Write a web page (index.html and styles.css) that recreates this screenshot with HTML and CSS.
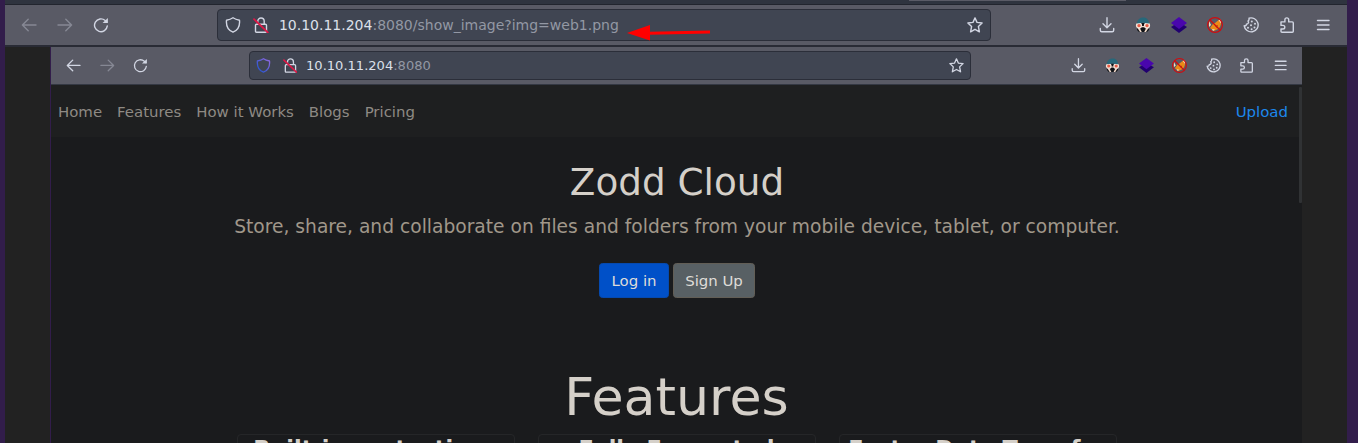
FILE: index.html
```html
<!DOCTYPE html>
<html lang="en">
<head>
<meta charset="utf-8">
<title>Zodd Cloud</title>
<link rel="stylesheet" href="styles.css">
</head>
<body>
<svg class="defs" width="0" height="0">
  <defs>
    <linearGradient id="shieldTint" x1="0" y1="1" x2="1" y2="0"><stop offset="0.2" stop-color="#3157d2"/><stop offset="1" stop-color="#9569df"/></linearGradient>
    <symbol id="back" viewBox="0 0 16 16"><path d="M15 8H1.600M7.200 2.300L1.400 8l5.800 5.700"/></symbol>
    <symbol id="forward" viewBox="0 0 16 16"><path d="M1 8h13.400M8.800 2.300L14.600 8l-5.800 5.700"/></symbol>
    <symbol id="reload" viewBox="0 0 16 16"><path d="M14.300 8.900a6.400 6.400 0 1 1-2.100-5.400l1.400 1.300"/><path class="solid" d="M14.900 1v5H9.600z"/></symbol>
    <symbol id="shield" viewBox="0 0 16 16"><path d="M8 .8c2 1.400 4 2 6.500 2.400.5 5.300-1.100 10-6.500 12C2.600 13.200 1 8.500 1.500 3.200 4 2.800 6 2.200 8 .8z"/></symbol>
    <symbol id="lock" viewBox="0 0 16 16"><path d="M4.800 7V4.200a3.200 3.200 0 0 1 6.400 0V7M3.500 7.200h9q1 0 1 1v6q0 1-1 1h-9q-1 0-1-1v-6q0-1 1-1z"/><path class="strike" d="M1 2.200L14.800 15.400"/></symbol>
    <symbol id="star" viewBox="0 0 16 16"><path d="M8 .9l2 4.500 5.100.6-3.700 3.500 1 5.300L8 12.300l-4.400 2.500 1-5.300L.9 6 6 5.400z"/></symbol>
    <symbol id="download" viewBox="0 0 16 16"><path d="M8 .7v9.800M4 6.700l4 4 4-4M1.300 11.500v1.700q0 1.500 1.500 1.500h10.400q1.500 0 1.500-1.500v-1.700"/></symbol>
    <symbol id="mask" viewBox="0 0 16 16">
      <path fill="#111418" stroke="none" d="M2 6h12v7l-2 2H4l-2-2z"/>
      <path fill="#f0d8ca" stroke="none" d="M6.500 9h3l.5 1.300H6zM2.500 11l2.500 4h1.800L4.800 11zM13.500 11L11 15H9.200l2-4z"/>
      <circle cx="4" cy="8.600" r="2.400" fill="#e65b45" stroke="#f2e4da"/><circle cx="12" cy="8.600" r="2.400" fill="#e65b45" stroke="#f2e4da"/>
      <path fill="#27687a" stroke="none" d="M1.800 6.600C2.500 2.500 5 .6 8.500.6S13.700 3 14 6.600L8 5.800z"/>
    </symbol>
    <symbol id="layers" viewBox="0 0 16 16"><path fill="#21006f" stroke="none" d="M0 10l8-5 8 5-8 6z"/><path fill="#4906ad" stroke="none" d="M0 6l8-6 8 6-8 6z"/></symbol>
    <symbol id="nofox" viewBox="0 0 16 16">
      <path fill="#eb8a18" stroke="none" d="M3 11l3-4 2-1 5-4 1 5-1 3-2 2-4 2z"/><path fill="#f3dfc4" stroke="none" d="M11.500 3l2.500-.5v4zM2 4l2 4-2 2zM5 12l3 .5-2 1.500z"/><path fill="#a95010" stroke="none" d="M8 9l3-1-1 3z"/>
      <circle cx="8" cy="8" r="7.400" stroke="#d00c10" stroke-width="1.200"/><path stroke="#d00c10" stroke-width="1.300" d="M3 3l10 10"/>
    </symbol>
    <symbol id="cookie" viewBox="0 0 16 16"><path d="M6 1.200A7 7 0 1 1 1.200 8.800c1.300.3 2.200-.2 2.200-1.600C5.300 6.800 6.200 5.500 5 4c1-.6 1.300-1.600 1-2.800z"/><g class="dot"><circle cx="8.800" cy="4.500" r="1"/><circle cx="12" cy="6.800" r="1"/><circle cx="8" cy="8.200" r="1"/><circle cx="5" cy="10.800" r="1"/><circle cx="8.600" cy="12.200" r="1"/><circle cx="11.500" cy="10.500" r="1"/></g></symbol>
    <symbol id="puzzle" viewBox="0 0 16 16"><path d="M2 6V4.900h3.900V2.800a1.900 1.900 0 0 1 3.800 0v2.100h3.600q1 0 1 1v8.300q0 1-1 1H3q-1 0-1-1V12h2a1.700 1.700 0 0 0 0-3.600H2z"/></symbol>
    <symbol id="menu" viewBox="0 0 16 16"><path d="M2.500 3.500h11.500M2.500 8h11.500M2.500 12.500h11.500"/></symbol>
  </defs>
</svg>

<div class="window">
  <div class="tabstrip"><div class="tab"></div></div>
  <header class="toolbar">
    <span class="cell dim"><svg><use href="#back"/></svg></span>
    <span class="cell dim"><svg><use href="#forward"/></svg></span>
    <span class="cell"><svg><use href="#reload"/></svg></span>
    <div class="url">
      <svg><use href="#shield"/></svg><svg><use href="#lock"/></svg>
      <span class="address"><b>10.10.11.204</b>:8080/show_image?img=web1.png</span>
      <svg><use href="#star"/></svg>
    </div>
    <div class="actions">
      <span class="cell"><svg><use href="#download"/></svg></span>
      <span class="cell"><svg><use href="#mask"/></svg></span>
      <span class="cell"><svg><use href="#layers"/></svg></span>
      <span class="cell"><svg><use href="#nofox"/></svg></span>
      <span class="cell"><svg><use href="#cookie"/></svg></span>
      <span class="cell"><svg><use href="#puzzle"/></svg></span>
      <span class="cell"><svg><use href="#menu"/></svg></span>
    </div>
  </header>
  <svg class="arrow" viewBox="0 0 86 18"><path d="M22 9.200L83 8" stroke="#f00" stroke-width="3"/><path d="M0 9L23 1v15.500z" fill="#f00"/></svg>

  <main class="viewer">
    <section class="shot">
      <header class="toolbar inner">
        <span class="cell"><svg><use href="#back"/></svg></span>
        <span class="cell dim"><svg><use href="#forward"/></svg></span>
        <span class="cell"><svg><use href="#reload"/></svg></span>
        <div class="url">
          <svg class="tinted"><use href="#shield"/></svg><svg><use href="#lock"/></svg>
          <span class="address"><b>10.10.11.204</b>:8080</span>
          <svg><use href="#star"/></svg>
        </div>
        <div class="actions">
          <span class="cell"><svg><use href="#download"/></svg></span>
          <span class="cell"><svg><use href="#mask"/></svg></span>
          <span class="cell"><svg><use href="#layers"/></svg></span>
          <span class="cell"><svg><use href="#nofox"/></svg></span>
          <span class="cell"><svg><use href="#cookie"/></svg></span>
          <span class="cell"><svg><use href="#puzzle"/></svg></span>
          <span class="cell"><svg><use href="#menu"/></svg></span>
        </div>
      </header>
      <nav class="nav">
        <a>Home</a><a>Features</a><a>How it Works</a><a>Blogs</a><a>Pricing</a><a class="upload">Upload</a>
      </nav>
      <div class="hero">
        <h1>Zodd Cloud</h1>
        <p>Store, share, and collaborate on files and folders from your mobile device, tablet, or computer.</p>
        <div class="buttons"><a class="btn login">Log in</a><a class="btn signup">Sign Up</a></div>
      </div>
      <h2>Features</h2>
      <div class="cards">
        <div class="card">Built-in protections</div>
        <div class="card">Fully Encrypted</div>
        <div class="card">Faster Data Transfer</div>
      </div>
      <div class="thumb"></div>
    </section>
  </main>
</div>
</body>
</html>
```
FILE: styles.css
```css
* { box-sizing: border-box; }
body { margin: 0; background: #321d4b; font-family: "DejaVu Sans", sans-serif; overflow: hidden; }
.defs { position: absolute; }
.window { position: relative; height: 443px; margin: 0 11px 0 5px; overflow: hidden; background: #222; display: flex; flex-direction: column; }
.tabstrip { flex: none; height: 5px; background: #2f343f; border-bottom: 1px solid #22252e; }
.tab { width: 217px; height: 1px; margin-left: 904px; background: #5a5b66; }

.toolbar { flex: none; display: flex; align-items: center; height: 42px; padding: 0 .6em 1px; font-size: 10px; background: #595a65; border-bottom: 2px solid #292b35; color: #d2d6e3; }
.toolbar svg { width: 1.6em; height: 1.6em; display: block; flex: none; fill: none; stroke: currentColor; stroke-width: 1.4; stroke-linecap: round; stroke-linejoin: round; }
.cell { width: 3.6em; display: flex; justify-content: center; }
.cell.dim { color: #868894; }
.solid, .dot { fill: currentColor; stroke: none; }
.strike { stroke: #dc1745; stroke-width: 1.8; }
.url { display: flex; align-items: center; width: 77.4em; height: 3.2em; margin-left: 9.8em; padding: 0 .7em; gap: 1.2em; background: #404552; border: 1px solid #2b2e39; border-radius: 4px; }
.url svg.tinted { stroke: url(#shieldTint); }
.address { flex: 1; margin-left: -.15em; color: #9398a4; white-space: nowrap; font-size: 1.4em; }
.address b { font-weight: normal; color: #dce0ea; }
.actions { display: flex; margin-left: auto; }
.toolbar.inner { font-size: 9.33px; height: 38px; padding: 0 .52em 0 .62em; border-bottom: 1px solid #343843; }
.inner .address { margin-left: -.2em; }
.arrow { position: absolute; left: 622px; top: 24px; width: 86px; height: 18px; }

.viewer { flex: 1; min-height: 0; padding: 0 45px; background: #222; }
.shot { position: relative; height: 396px; overflow: hidden; border-left: 1px solid #321d4b; background: #1a1b1d; }
.nav { display: flex; align-items: center; height: 52px; padding: 2px 14px 0 7px; gap: 15px; background: #1e1f20; color: #8e8a84; font-size: 14.93px; }
.upload { margin-left: auto; color: #1d88ed; }
.hero { display: flex; flex-direction: column; align-items: center; padding: 23px 0 0 1px; }
h1 { margin: 0; font-size: 37.33px; line-height: 45px; font-weight: normal; color: #d5d0c9; }
.hero p { margin: 7px 0 0; font-size: 18.67px; line-height: 30px; color: #a0978a; white-space: nowrap; }
.buttons { display: flex; gap: 4px; margin-top: 21px; }
.btn { display: flex; align-items: center; justify-content: center; height: 35px; font-size: 14.93px; color: #dfdcd8; border-radius: 3.5px; }
.login { width: 70px; background: #0050c8; border: 1px solid #064aaf; }
.signup { width: 82px; background: #586064; border: 1px solid #625e56; }
h2 { margin: 68px 0 0; text-align: center; font-size: 52.2px; line-height: 62px; font-weight: normal; color: #d5d0c9; }
.cards { display: flex; justify-content: center; gap: 23px; margin-top: 6px; }
.card { flex: none; width: 278px; height: 60px; padding-top: 1px; text-align: center; white-space: nowrap; font-size: 22.4px; line-height: 27px; font-weight: bold; color: #d5d0c9; border: 1px solid #252628; border-radius: 4px; }
.thumb { position: absolute; right: 0; top: 40px; width: 3px; height: 116px; background: #303234; border-radius: 1px; }
```
